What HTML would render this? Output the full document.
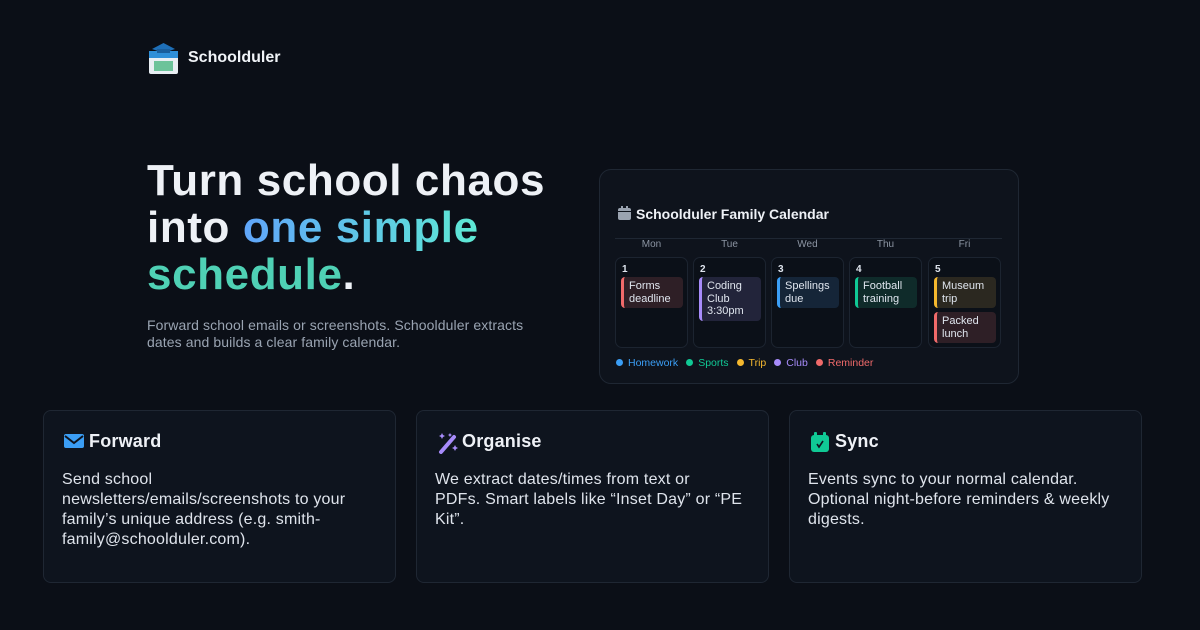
<!DOCTYPE html>
<html><head><style>
*{margin:0;padding:0;box-sizing:border-box}
body{width:1200px;height:630px;background:#0b0f17;font-family:"Liberation Sans",sans-serif;color:#e6ebf2;position:relative;overflow:hidden}
.abs{position:absolute}
h1{position:absolute;left:147px;top:157px;font-size:44px;line-height:47px;font-weight:700;letter-spacing:0.6px;color:#eef1f6}
.g{background:linear-gradient(90deg,#60a5fa,#5eead4);-webkit-background-clip:text;background-clip:text;color:transparent}
.t{color:#4fd1b5}
.sub{left:147px;top:317px;font-size:14px;line-height:17px;color:#9aa4b2;width:410px;letter-spacing:0.1px}
.cal{left:599px;top:169px;width:420px;height:215px;border:1px solid #1f2733;border-radius:12px;background:#0e131c}
.cell{position:absolute;top:257px;width:73px;height:91px;border:1px solid #1c2430;border-radius:7px;background:#0b1018}
.cell b{position:absolute;left:6px;top:6px;font-size:10px;color:#dfe5ee}
.ev{position:absolute;left:5px;width:62px;border-radius:4px;border-left:3px solid;font-size:11px;line-height:12.5px;padding:3px 5px;color:#dfe5ee}
.day{position:absolute;top:239px;width:73px;text-align:center;font-size:10px;color:#8c95a3}
.card{position:absolute;top:410px;width:353px;height:173px;border:1px solid #1f2733;border-radius:8px;background:#0e141e}
.card h3{position:absolute;left:45px;top:20px;font-size:18px;font-weight:700;color:#eef1f6;letter-spacing:0.2px}
.card p{position:absolute;left:18px;top:59px;width:330px;font-size:16px;line-height:20px;color:#dfe4ec;letter-spacing:0.2px;white-space:nowrap}
.ic{position:absolute;left:20px;top:21px}
.lg{font-size:10.5px;margin-right:8px}
.lg i{display:inline-block;width:7px;height:7px;border-radius:50%;margin-right:5px;vertical-align:0}
</style></head><body>
<svg class="abs" style="left:148px;top:41px" width="31" height="34" viewBox="0 0 31 34">
<rect x="1" y="10" width="29" height="23" rx="2" fill="#e8eef3"/>
<rect x="1" y="10" width="29" height="7" fill="#2f8fd8"/>
<rect x="6" y="20" width="19" height="10" fill="#6cc39a"/>
<path d="M4 8 L15.5 2 L27 8 L15.5 12 Z" fill="#1e6fb8"/><rect x="9" y="8" width="13" height="4" fill="#1a5e9c"/>
</svg>
<div class="abs" style="left:188px;top:49px;font-size:16px;font-weight:700;color:#f1f4f8">Schoolduler</div>
<h1>Turn school chaos<br>into <span class="g">one simple</span><br><span class="t">schedule</span>.</h1>
<div class="abs sub">Forward school emails or screenshots. Schoolduler extracts dates and builds a clear family calendar.</div>
<div class="abs cal"></div>
<svg class="abs" style="left:618px;top:206px" width="13" height="14" viewBox="0 0 13 14"><rect x="0" y="2" width="13" height="12" rx="2" fill="#9aa3b0"/><rect x="3" y="0" width="2" height="4" fill="#9aa3b0"/><rect x="8" y="0" width="2" height="4" fill="#9aa3b0"/><rect x="0" y="5" width="13" height="1" fill="#0e131c"/></svg>
<div class="abs" style="left:636px;top:206px;font-size:14px;font-weight:700;color:#eef1f6">Schoolduler Family Calendar</div>
<div class="abs" style="left:615px;top:238px;width:387px;height:1px;background:#1f2733"></div>
<div class="day" style="left:615px">Mon</div><div class="day" style="left:693px">Tue</div><div class="day" style="left:771px">Wed</div><div class="day" style="left:849px">Thu</div><div class="day" style="left:928px">Fri</div>
<div class="cell" style="left:615px"><b>1</b><div class="ev" style="top:19px;border-color:#f06a6a;background:#2e1f26">Forms deadline</div></div>
<div class="cell" style="left:693px"><b>2</b><div class="ev" style="top:19px;border-color:#a78bfa;background:#22243a">Coding Club 3:30pm</div></div>
<div class="cell" style="left:771px"><b>3</b><div class="ev" style="top:19px;border-color:#3b9ef5;background:#152538">Spellings due</div></div>
<div class="cell" style="left:849px"><b>4</b><div class="ev" style="top:19px;border-color:#10c995;background:#0f2b2a">Football training</div></div>
<div class="cell" style="left:928px"><b>5</b><div class="ev" style="top:19px;border-color:#f5b82e;background:#2b2820">Museum trip</div><div class="ev" style="top:54px;border-color:#f06a6a;background:#2e1f26">Packed lunch</div></div>
<div class="abs" style="left:616px;top:353px">
<span class="lg" style="color:#3b9ef5"><i style="background:#3b9ef5"></i>Homework</span><span class="lg" style="color:#10c995"><i style="background:#10c995"></i>Sports</span><span class="lg" style="color:#f5b82e"><i style="background:#f5b82e"></i>Trip</span><span class="lg" style="color:#a78bfa"><i style="background:#a78bfa"></i>Club</span><span class="lg" style="color:#f06a6a"><i style="background:#f06a6a"></i>Reminder</span></div>

<div class="card" style="left:43px"><svg class="ic" width="20" height="18" viewBox="0 0 20 18"><rect x="0" y="2" width="20" height="14" rx="2" fill="#3b9ef5"/><path d="M1 4 L10 11 L19 4" stroke="#0e141e" stroke-width="2" fill="none"/></svg><h3>Forward</h3><p>Send school<br>newsletters/emails/screenshots to your<br>family’s unique address (e.g. smith-<br>family@schoolduler.com).</p></div>
<div class="card" style="left:416px"><svg class="ic" width="22" height="22" viewBox="0 0 22 22"><path d="M4 20 L17 5" stroke="#a78bfa" stroke-width="4" stroke-linecap="round"/><path d="M5 1 l1 2 2 1 -2 1 -1 2 -1-2 -2-1 2-1z M18 13 l1 2 2 1 -2 1 -1 2 -1-2 -2-1 2-1z M13 1 l.7 1.3 1.3.7 -1.3.7 -.7 1.3 -.7-1.3 -1.3-.7 1.3-.7z" fill="#a78bfa"/></svg><h3>Organise</h3><p>We extract dates/times from text or<br>PDFs. Smart labels like “Inset Day” or “PE<br>Kit”.</p></div>
<div class="card" style="left:789px"><svg class="ic" width="20" height="20" viewBox="0 0 20 20"><rect x="1" y="3" width="18" height="17" rx="3" fill="#10c995"/><rect x="4" y="0" width="3" height="5" rx="1" fill="#10c995"/><rect x="13" y="0" width="3" height="5" rx="1" fill="#10c995"/><path d="M7 12 l2 3 4-6" stroke="#0e141e" stroke-width="1.6" fill="none"/></svg><h3>Sync</h3><p>Events sync to your normal calendar.<br>Optional night-before reminders &amp; weekly<br>digests.</p></div>
</body></html>
